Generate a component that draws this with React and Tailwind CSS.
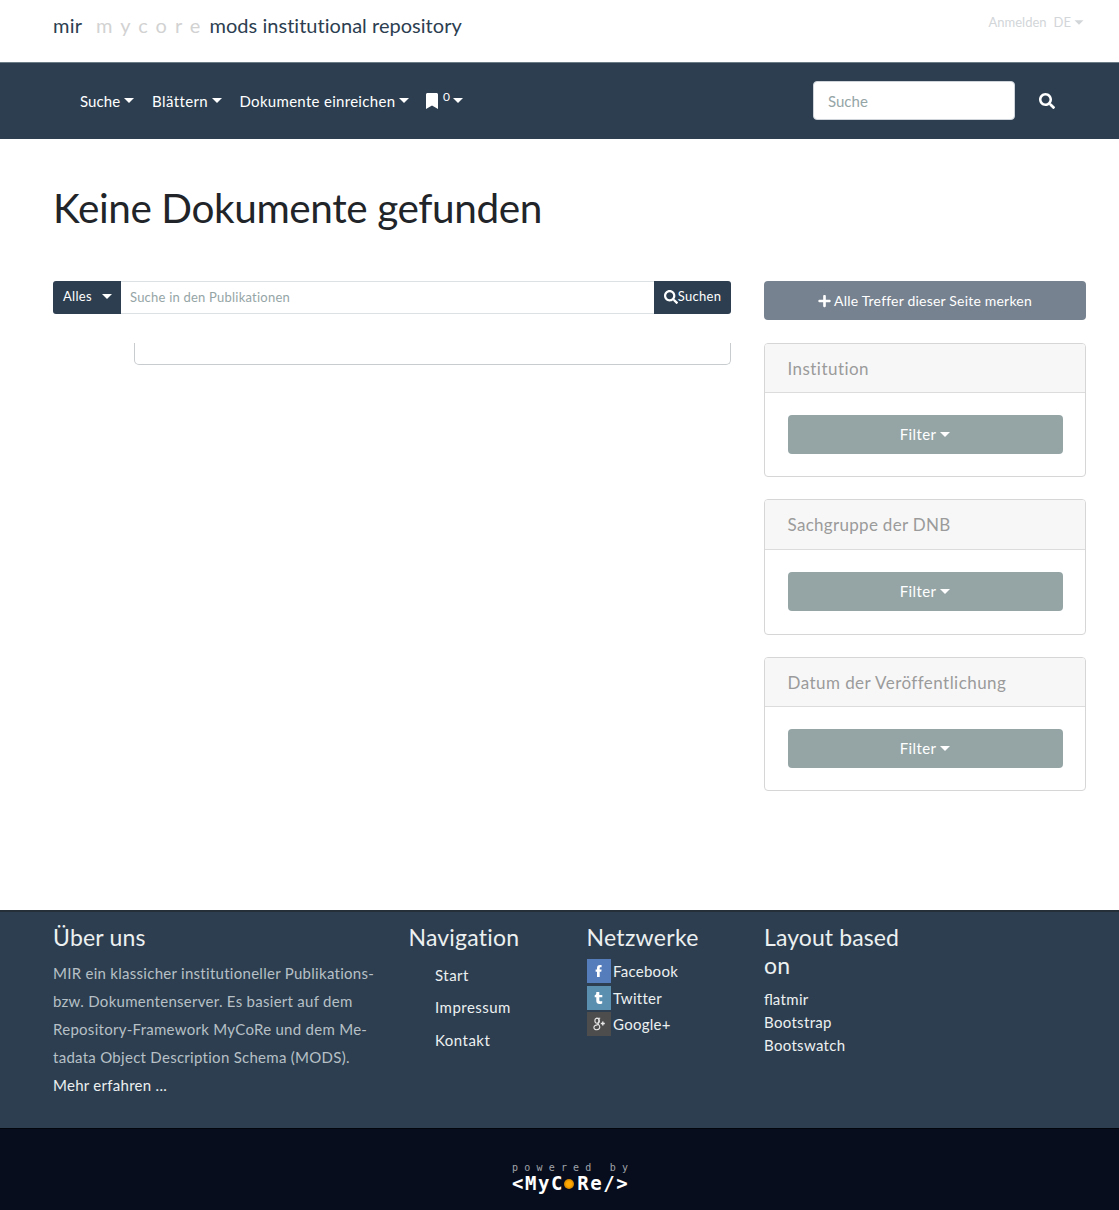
import React from 'react';
import { FaSearch, FaBookmark, FaPlus } from 'react-icons/fa';

function Caret({ className = 'ml-[4px] mb-[1px]' }) {
  return (
    <span
      className={`inline-block h-0 w-0 border-x-[5px] border-t-[5px] border-x-transparent border-t-current ${className}`}
    />
  );
}

function NavItem({ children, className }) {
  return (
    <a className={`flex items-center whitespace-nowrap ${className}`}>
      <span>{children}</span>
      <Caret />
    </a>
  );
}

function FilterCard({ title, className, titleClass, headClass = 'h-[49px]', bodyClass = 'pt-[22px]' }) {
  return (
    <section className={`flex flex-col overflow-hidden rounded-[4px] border border-[#d6d6d6] ${className}`}>
      <h3
        className={`flex shrink-0 items-center border-b border-[#dcdcdc] bg-[#f7f7f7] px-[22.5px] pt-[1px] text-[17px] text-[#9b9b9b] ${headClass} ${titleClass}`}
      >
        {title}
      </h3>
      <div className={`px-[22.5px] ${bodyClass}`}>
        <button className="flex h-[39px] w-full items-center justify-center rounded-[4px] bg-[#95a5a6] text-[15px] tracking-[0.4px] text-white">
          Filter
          <Caret className="ml-[4px] mb-[1px]" />
        </button>
      </div>
    </section>
  );
}

function Social({ color, label, children }) {
  return (
    <li className="flex h-[26.6px] items-center">
      <svg width="24" height="24" viewBox="0 0 24 24" className="mr-[2.5px] shrink-0">
        <rect width="24" height="24" fill={color} />
        {children}
      </svg>
      {label}
    </li>
  );
}

export default function App() {
  return (
    <div className="flex h-[1210px] w-[1119px] flex-col overflow-hidden bg-white font-['Lato',sans-serif] text-[15px] text-[#212529] [font-variant-ligatures:none]">
      <header className="flex h-[62px] justify-between pl-[53px] pr-[36px]">
        <div className="flex whitespace-nowrap pt-[10px] text-[20px] leading-[30px] text-[#2c3e50]">
          <span className="w-[43px] tracking-[0.3px]">mir</span>
          <span className="w-[113.5px] tracking-[8px] text-[#d2d2d2]">mycore</span>
          <span className="tracking-[0.03px]">mods institutional repository</span>
        </div>
        <div className="flex h-[46px] items-center text-[13px] text-[#d2d6d9]">
          <span className="mr-[7px]">Anmelden</span>
          <span>DE</span>
          <Caret className="-mr-[1px] mb-[2px] ml-[3px] scale-90" />
        </div>
      </header>

      <nav className="flex h-[77px] items-center border-t border-[#6b7c87] bg-[#2c3e50] pl-[80px] text-[15px] text-white">
        <NavItem className="w-[72px] tracking-[0.1px]">Suche</NavItem>
        <NavItem className="w-[87.5px] tracking-[0.4px]">Blättern</NavItem>
        <NavItem className="w-[186.5px] tracking-[0.3px]">Dokumente einreichen</NavItem>
        <a className="flex items-center">
          <FaBookmark className="h-[16px] w-[12px]" />
          <span className="mb-[8px] ml-[5px] text-[12px]">0</span>
          <Caret className="mb-[1px] ml-[3.5px]" />
        </a>
        <input
          placeholder="Suche"
          className="mb-[1px] ml-auto h-[39px] w-[202px] rounded-[4px] border border-[#ced4da] bg-white px-[14px] placeholder:text-[#95a5a6]"
        />
        <FaSearch className="ml-[24px] mr-[64px] h-[16px] w-[16px]" />
      </nav>

      <main className="h-[771px] shrink-0 pl-[53px] pr-[33px] pt-[44px]">
        <h1 className="h-[98px] text-[40.5px] leading-[49px] tracking-[-0.4px]">Keine Dokumente gefunden</h1>
        <div className="flex gap-[33px]">
          <div className="w-[678px]">
            <div className="flex h-[33px] text-[13px]">
              <button className="flex w-[68px] items-center rounded-l-[3px] bg-[#2c3e50] pb-[1px] pl-[10px] tracking-[0.3px] text-white">
                Alles
                <Caret className="mb-[2px] ml-[10px]" />
              </button>
              <input
                placeholder="Suche in den Publikationen"
                className="min-w-0 flex-1 border-y border-[#dce1e4] px-[9px] tracking-[0.22px] placeholder:text-[#95a5a6]"
              />
              <button className="flex w-[77px] items-center justify-center rounded-r-[3px] bg-[#2c3e50] pb-[2px] tracking-[0.3px] text-white">
                <FaSearch className="h-[14px] w-[14px]" />
                Suchen
              </button>
            </div>
            <div className="ml-[81px] mt-[29px] h-[22px] rounded-b-[5px] border border-t-0 border-[#c8ccce]" />
          </div>
          <aside className="w-[322px] shrink-0">
            <button className="flex h-[39px] w-full items-center justify-center rounded-[4px] bg-[#76828f] text-[14px] tracking-[0.2px] text-white">
              <FaPlus className="mr-[3px] h-[14px] w-[13px]" />
              Alle Treffer dieser Seite merken
            </button>
            <FilterCard title="Institution" className="mt-[23px] h-[134px]" titleClass="tracking-[0.45px]" />
            <FilterCard
              title="Sachgruppe der DNB"
              className="mt-[22px] h-[136px]"
              titleClass="tracking-[0.3px]"
              headClass="h-[50px]"
            />
            <FilterCard title="Datum der Veröffentlichung" className="mt-[22px] h-[134px]" titleClass="tracking-[0.45px]" />
          </aside>
        </div>
      </main>

      <footer className="flex h-[218px] shrink-0 border-t-2 border-[#252f38] bg-[#2c3e50] pl-[53px] pt-[11px] tracking-[0.28px] text-[#ecf0f1]">
        <section className="w-[355.5px]">
          <h4 className="text-[23px] leading-[28px] tracking-[0.2px]">Über uns</h4>
          <p className="mt-[8px] whitespace-nowrap text-[15px] leading-[28.1px] text-[#b7c0c6]">
            MIR ein klassicher institutioneller Publikations-
            <br />
            bzw. Dokumentenserver. Es basiert auf dem
            <br />
            Repository-Framework MyCoRe und dem Me-
            <br />
            tadata Object Description Schema (MODS).
            <br />
            <a className="text-[#ecf0f1]">Mehr erfahren ...</a>
          </p>
        </section>
        <section className="w-[178px]">
          <h4 className="text-[23px] leading-[28px] tracking-[0.2px]">Navigation</h4>
          <ul className="ml-[26.5px] mt-[8px] leading-[32.3px] tracking-[0.48px]">
            <li>Start</li>
            <li>Impressum</li>
            <li>Kontakt</li>
          </ul>
        </section>
        <section className="w-[177.5px]">
          <h4 className="text-[23px] leading-[28px] tracking-[0.3px]">Netzwerke</h4>
          <ul className="mt-[7px]">
            <Social color="#557dbc" label="Facebook">
              <path d="M10 18v-5.3H8.6v-2.2H10V9.2c0-2 1-3.2 3-3.2h1.6v2.3h-1c-.7 0-.9.3-.9.9v1.3h1.9l-.3 2.2h-1.6V18z" fill="#fff" />
            </Social>
            <Social color="#5b8fb0" label="Twitter">
              <path d="M9.3 6h3v3h3v2.3h-3v2.7c0 1.3 1 1.6 2.9.9v2.5c-3.4 1.2-5.9.4-5.9-2.5v-3.6H7.7V9.3c1-.3 1.6-1.2 1.6-2.3z" fill="#fff" />
            </Social>
            <Social color="#4d4d4d" label="Google+">
              <g fill="none" stroke="#e8e8e8" strokeWidth="1.1">
                <ellipse cx="10" cy="8.7" rx="2.1" ry="2.5" />
                <path d="M9 6.2h4.2M11.7 7c1 2 .5 3.4-.6 4.2-1 .8 1.7 1.7 1.7 3.8 0 3.5-5.9 3.5-5.9.5 0-2 2-2.7 3.8-2.6" />
                <path d="M13.8 11.5h4M15.8 9.5v4" strokeWidth="1.4" />
              </g>
            </Social>
          </ul>
        </section>
        <section className="w-[145px]">
          <h4 className="text-[23px] leading-[28px] tracking-[0.1px]">Layout based on</h4>
          <ul className="mt-[8.6px] leading-[23.3px] tracking-[0.32px]">
            <li>
              <span className="tracking-[0] [font-variant-ligatures:common-ligatures]">fl</span>atmir
            </li>
            <li>Bootstrap</li>
            <li>Bootswatch</li>
          </ul>
        </section>
      </footer>

      <div className="flex flex-1 flex-col items-start whitespace-nowrap border-t border-[#02060c] bg-[#070d1c] pl-[512px] pt-[33px] font-['DejaVu_Sans_Mono',monospace]">
        <div className="h-[12px] text-[10px] leading-[12px] tracking-[6.2px] text-[#a0a4ab]">powered by</div>
        <div className="flex h-[18px] items-center text-[19px] font-bold leading-[18px] tracking-[1.6px] text-white">
          &lt;MyC
          <span className="mr-[3px] mt-[2px] h-[10px] w-[10px] rounded-full bg-[radial-gradient(circle,#ffa800_35%,#a86500_100%)]" />
          Re/&gt;
        </div>
      </div>
    </div>
  );
}
